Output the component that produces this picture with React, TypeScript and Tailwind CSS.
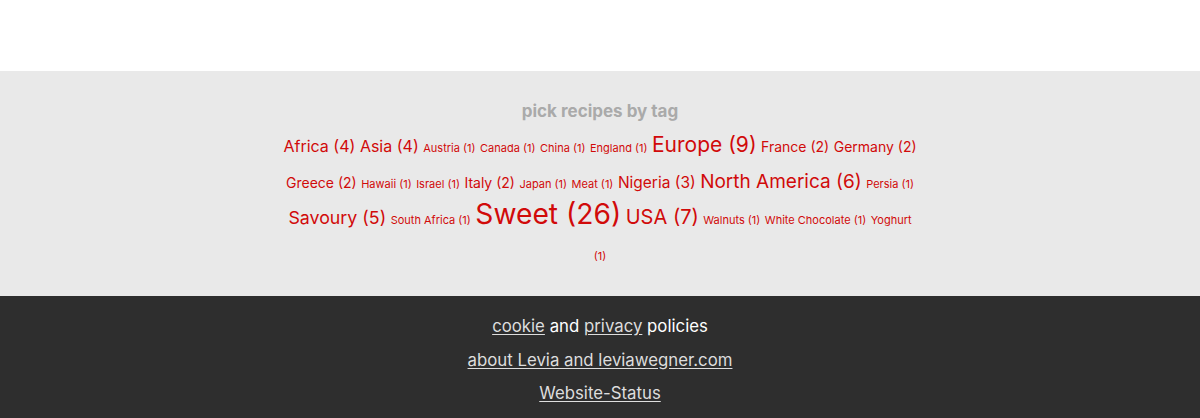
const tags: [string, number][] = [
  ["Africa", 4],
  ["Asia", 4],
  ["Austria", 1],
  ["Canada", 1],
  ["China", 1],
  ["England", 1],
  ["Europe", 9],
  ["France", 2],
  ["Germany", 2],
  ["Greece", 2],
  ["Hawaii", 1],
  ["Israel", 1],
  ["Italy", 2],
  ["Japan", 1],
  ["Meat", 1],
  ["Nigeria", 3],
  ["North America", 6],
  ["Persia", 1],
  ["Savoury", 5],
  ["South Africa", 1],
  ["Sweet", 26],
  ["USA", 7],
  ["Walnuts", 1],
  ["White Chocolate", 1],
  ["Yoghurt", 1],
];

// font size grows with the number of recipes in the tag
function sizeClass(n: number) {
  if (n >= 20) return "text-[28.2px]";
  if (n >= 8) return "text-[21px]";
  if (n >= 7) return "text-[20px]";
  if (n >= 6) return "text-[19px]";
  if (n >= 5) return "text-[17.8px]";
  if (n >= 4) return "text-[16px]";
  if (n >= 3) return "text-[15.5px]";
  if (n >= 2) return "text-[14px]";
  return "text-[11px]";
}

export default function App() {
  return (
    <div className="font-['Inter','Liberation_Sans',sans-serif]">
      <div className="h-[71px] bg-white" />
      <section className="bg-[#e9e9e9] pt-[26px] pb-[24px]">
        <h2 className="text-center text-[17px] font-bold leading-[28px] text-[#aaaaaa]">
          pick recipes by tag
        </h2>
        <div className="mx-auto mt-[3px] w-[635px] text-center leading-[36px]">
          {tags.map(([name, n], i) => (
            <span key={name}>
              <a href="#" className={`${sizeClass(n)} text-[#d10a0a] leading-none`}>
                {name} ({n})
              </a>
              {i < tags.length - 1 ? " " : ""}
            </span>
          ))}
        </div>
      </section>
      <footer className="bg-[#2e2e2e] pt-[14px] pb-[10px] text-center text-[16.8px] leading-[33.5px] text-white">
        <p>
          <a href="#" className="text-[#dddddd] underline underline-offset-2">cookie</a> and{" "}
          <a href="#" className="text-[#dddddd] underline underline-offset-2">privacy</a> policies
        </p>
        <p>
          <a href="#" className="text-[#dddddd] underline underline-offset-2">about Levia and leviawegner.com</a>
        </p>
        <p>
          <a href="#" className="text-[#dddddd] underline underline-offset-2">Website-Status</a>
        </p>
      </footer>
    </div>
  );
}
